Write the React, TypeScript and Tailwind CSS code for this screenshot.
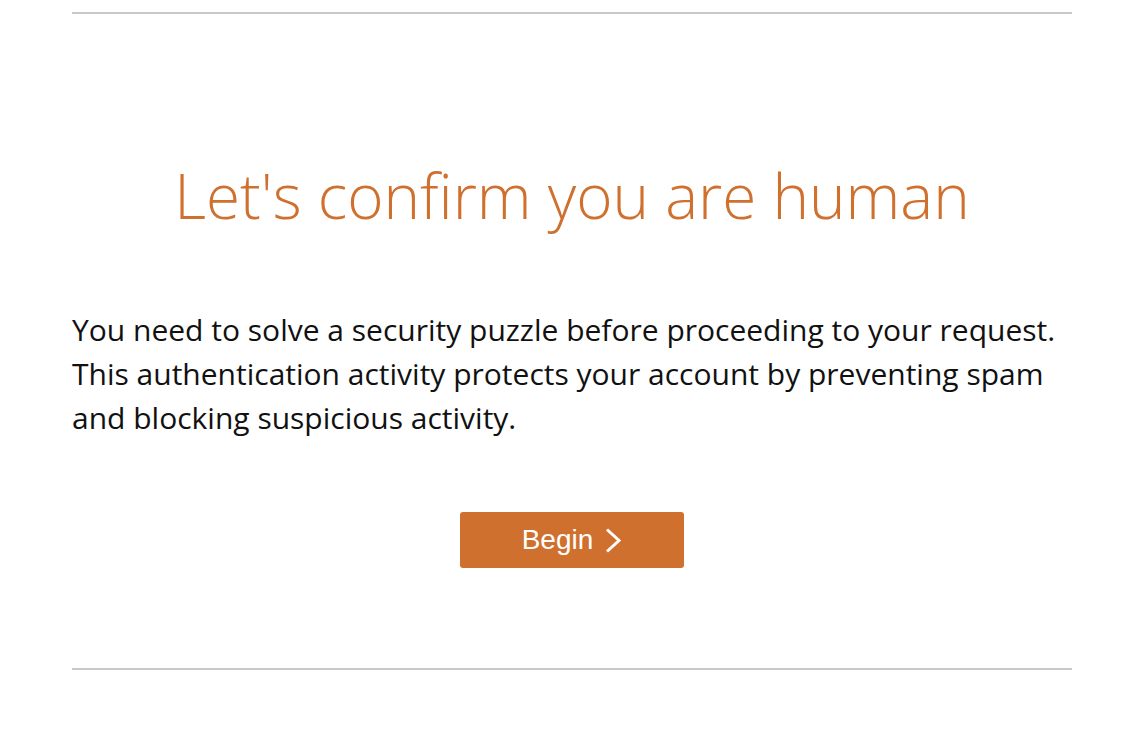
export default function App() {
  return (
    <div className="min-h-screen bg-white font-['Open_Sans',sans-serif]">
      <div className="ml-[72px] w-[1000px] pt-[12px]">
        <hr className="border-0 border-t-2 border-[#c8c8c8]" />

        <h1 className="mt-[141px] text-center text-[62px] font-light leading-[80px] text-[#d0702f]">
          Let's confirm you are human
        </h1>

        <p className="mt-[73px] text-[30px] leading-[44px] text-[#111111]">
          You need to solve a security puzzle before proceeding to your request. This authentication activity protects
          your account by preventing spam and blocking suspicious activity.
        </p>

        <div className="mt-[72px] flex justify-center">
          <button className="flex h-[56px] w-[224px] items-center justify-center gap-[12px] rounded-[3px] bg-[#d0702f] font-['Liberation_Sans',Arial,sans-serif] text-[28px] text-white">
            Begin
            <svg width="17" height="25" viewBox="0 0 17 25" fill="none">
              <path d="M2 1.5l12 11-12 11" stroke="white" strokeWidth="3" />
            </svg>
          </button>
        </div>

        <hr className="mt-[100px] border-0 border-t-2 border-[#c8c8c8]" />
      </div>
    </div>
  );
}
